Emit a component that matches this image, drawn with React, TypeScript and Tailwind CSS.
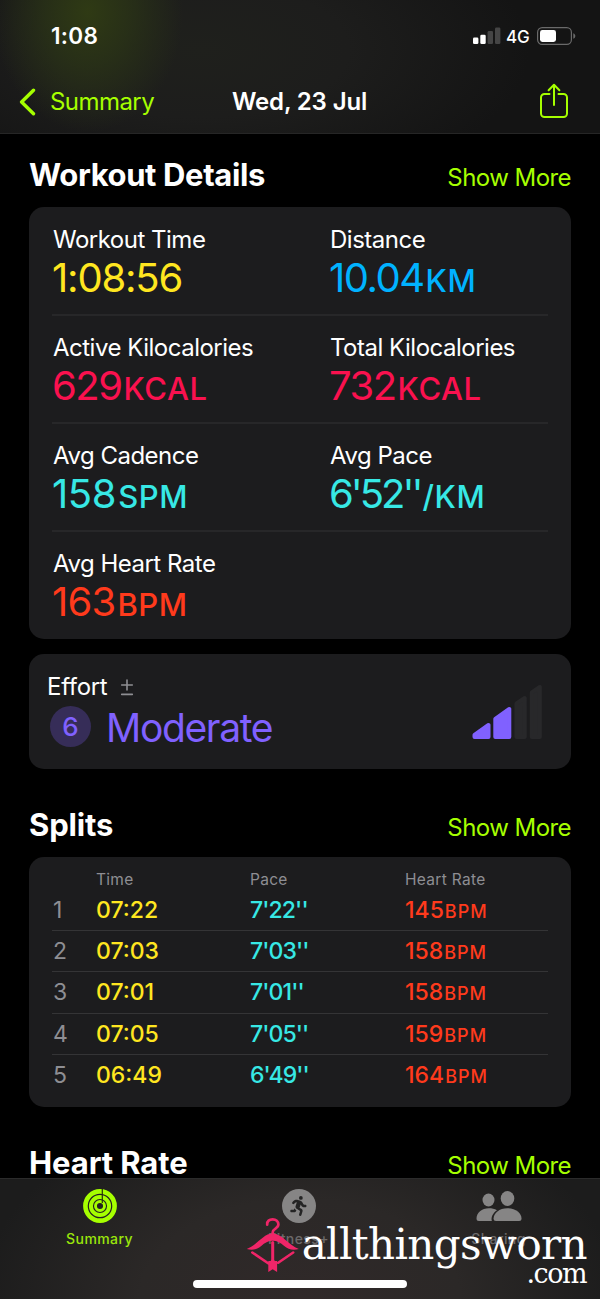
import React from "react";
import { FaPersonRunning } from "react-icons/fa6";

type Metric = { label: string; value: string; unit?: string; color: string; tracking?: string };

const metrics: Metric[][] = [
  [
    { label: "Workout Time", value: "1:08:56", color: "text-[#ffe620]", tracking: "tracking-[-1.2px]" },
    { label: "Distance", value: "10.04", unit: "KM", color: "text-[#00b2ff]", tracking: "tracking-[-1.5px]" },
  ],
  [
    { label: "Active Kilocalories", value: "629", unit: "KCAL", color: "text-[#fa114f]" },
    { label: "Total Kilocalories", value: "732", unit: "KCAL", color: "text-[#fa114f]" },
  ],
  [
    { label: "Avg Cadence", value: "158", unit: "SPM", color: "text-[#37e8e5]", tracking: "tracking-[-0.4px]" },
    { label: "Avg Pace", value: "6'52''", unit: "/KM", color: "text-[#37e8e5]", tracking: "tracking-[-3px]" },
  ],
  [{ label: "Avg Heart Rate", value: "163", unit: "BPM", color: "text-[#ff3a1c]", tracking: "tracking-[-0.8px]" }],
];

const splits = [
  { n: 1, time: "07:22", pace: "7'22''", bpm: 145 },
  { n: 2, time: "07:03", pace: "7'03''", bpm: 158 },
  { n: 3, time: "07:01", pace: "7'01''", bpm: 158 },
  { n: 4, time: "07:05", pace: "7'05''", bpm: 159 },
  { n: 5, time: "06:49", pace: "6'49''", bpm: 164 },
];

function StatusBar() {
  return (
    <div className="flex h-[72px] items-center justify-between pl-[51px] pr-[24px]">
      <span className="text-[22.5px] font-semibold leading-7 tracking-[0.3px] text-white">1:08</span>
      <div className="flex items-center">
        <svg width="28" height="18" viewBox="0 0 28 18" className="mr-[5px]">
          <rect x="0" y="10.5" width="5.4" height="6.5" rx="1.3" fill="#fff" />
          <rect x="7.3" y="7.8" width="5.4" height="9.2" rx="1.3" fill="#fff" />
          <rect x="14.6" y="4" width="5.4" height="13" rx="1.3" fill="#454545" />
          <rect x="22" y="0.5" width="5.4" height="16.5" rx="1.3" fill="#454545" />
        </svg>
        <span className="mr-[7px] w-[24px] pt-px text-[17px] font-medium leading-5 tracking-[-0.2px] text-white">4G</span>
        <svg width="39" height="18" viewBox="0 0 39 18">
          <rect x="0.6" y="0.6" width="33.8" height="16.8" rx="4.6" fill="none" stroke="#6a6a6a" strokeWidth="1.2" />
          <rect x="3" y="3" width="16" height="12" rx="2.4" fill="#fff" />
          <path d="M36.3 6.2c1.4.5 2 1.600 2 2.800s-.6 2.300-2 2.800z" fill="#6a6a6a" />
        </svg>
      </div>
    </div>
  );
}

function NavBar() {
  return (
    <div className="flex h-[60px] items-center justify-between pl-[19px] pr-[31px] text-[24px] leading-7">
      <div className="flex w-[160px] items-center gap-[13px] text-[#a6ff00]">
        <svg width="18" height="28" viewBox="0 0 18 28" fill="none" stroke="currentColor" strokeWidth="3.4" strokeLinecap="round" strokeLinejoin="round">
          <path d="M14.500 2.200 2.600 14l11.900 11.800" />
        </svg>
        <span className="tracking-[-0.55px]">Summary</span>
      </div>
      <span className="pl-px font-semibold tracking-[-0.15px] text-white">Wed, 23 Jul</span>
      <div className="flex w-[150px] justify-end pb-[2px] text-[#a6ff00]">
        <svg width="30" height="36" viewBox="0 0 30 36" fill="none" stroke="currentColor" strokeWidth="2" strokeLinecap="round" strokeLinejoin="round">
          <path d="M10.500 11H5.500a3.500 3.500 0 0 0-3.500 3.500v16A3.500 3.500 0 0 0 5.500 34h19a3.500 3.500 0 0 0 3.500-3.500v-16A3.500 3.500 0 0 0 24.500 11h-5" />
          <path d="M15 22V2M9.600 7.200 15 1.800l5.400 5.400" />
        </svg>
      </div>
    </div>
  );
}

function SectionHeading({ title, tracking }: { title: string; tracking: string }) {
  return (
    <div className="flex items-baseline justify-between">
      <h2 className={`whitespace-nowrap text-[31px] font-bold leading-[38px] text-white ${tracking}`}>{title}</h2>
      <a className="text-[24px] leading-7 tracking-[-0.55px] text-[#a6ff00]">Show More</a>
    </div>
  );
}

function MetricCell({ label, value, unit, color, tracking = "tracking-[-1.5px]" }: Metric) {
  return (
    <div>
      <div className="text-[24px] leading-7 tracking-[-0.5px] text-white">{label}</div>
      <div className={`-ml-px mt-px whitespace-nowrap text-[40px] leading-[45px] ${color}`}>
        <span className={tracking}>{value}</span>
        {unit && <span className="ml-[2px] text-[31px] font-medium leading-none tracking-[0.6px]">{unit}</span>}
      </div>
    </div>
  );
}

function MetricsCard() {
  return (
    <div className="mt-[13px] h-[432px] rounded-[15px] bg-[#1c1c1e] px-[23px] pt-px">
      {metrics.map((row, i) => (
        <div key={i} className={`grid h-[108px] grid-cols-[277px_1fr] pl-px pt-[18px] ${i < 3 ? "border-b-2 border-[#272729]" : ""}`}>
          {row.map((m) => (
            <MetricCell key={m.label} {...m} />
          ))}
        </div>
      ))}
    </div>
  );
}

function EffortCard() {
  return (
    <div className="mt-[15px] flex h-[115px] justify-between rounded-[15px] bg-[#1c1c1e] pl-[18px] pr-[28px] pt-[19px]">
      <div>
        <div className="flex items-center text-[24px] leading-7 tracking-[-0.3px] text-white">
          <span>Effort</span>
          <svg width="14" height="18" viewBox="0 0 14 18" className="ml-[13px]" stroke="#8e8e93" strokeWidth="1.6" strokeLinecap="round">
            <path d="M7 2v10M1.700 7h10.600M1.700 16.400h10.600" />
          </svg>
        </div>
        <div className="mt-[5px] flex items-start text-[#8061ff]">
          <span className="ml-[3px] flex size-[41px] items-center justify-center rounded-full bg-[#362d58] text-[26px] font-medium">6</span>
          <span className="ml-[15px] pt-[2px] text-[39px] leading-[40px] tracking-[-1.35px]">Moderate</span>
        </div>
      </div>
      <svg width="71" height="56" viewBox="0 0 71 56" className="mt-[12px]" strokeWidth="4" strokeLinejoin="round">
        <g fill="#8061ff" stroke="#8061ff">
          <path d="M2.500 50 16.500 40v12H2.500z" />
          <path d="M23.300 34 37.300 24v28h-14z" />
        </g>
        <g fill="#28282a" stroke="#28282a">
          <path d="M44.500 18.500 52.700 13v39h-8.200z" />
          <path d="M59.800 7.500 67.800 2v50h-8z" />
        </g>
      </svg>
    </div>
  );
}

function SplitsCard() {
  return (
    <div className="mt-[13px] h-[250px] rounded-[15px] bg-[#1c1c1e] px-[23px] pt-[13px]">
      <div className="grid grid-cols-[44px_154px_155px_1fr] text-[15.500px] leading-5 tracking-[0.3px] text-[#8e8e93]">
        <span />
        <span>Time</span>
        <span>Pace</span>
        <span>Heart Rate</span>
      </div>
      {splits.map((s, i) => (
        <div key={s.n} className={`grid h-[41.200px] grid-cols-[44px_154px_155px_1fr] items-center text-[23px] font-medium leading-7 ${i < 4 ? "border-b border-[#343436]" : ""}`}>
          <span className="pl-px font-normal text-[#8e8e93]">{s.n}</span>
          <span className="text-[#ffe620]">{s.time}</span>
          <span className="tracking-[-0.9px] text-[#37e8e5]">{s.pace}</span>
          <span className="text-[#ff3a1c]">
            <span>{s.bpm}</span>
            <span className="ml-px text-[18px] leading-none tracking-[1px]">BPM</span>
          </span>
        </div>
      ))}
    </div>
  );
}

function RingsIcon() {
  return (
    <svg width="34" height="34" viewBox="0 0 34 34" fill="none">
      <circle cx="17" cy="17" r="14.600" stroke="#a6ff00" strokeWidth="4.600" />
      <circle cx="17" cy="17" r="9.100" stroke="#a6ff00" strokeWidth="4" />
      <circle cx="17" cy="17" r="4.500" stroke="#a6ff00" strokeWidth="2.900" />
      <path d="M19.300 0v14" stroke="#24300c" strokeWidth="1.200" />
    </svg>
  );
}

function SharingIcon() {
  return (
    <svg width="46" height="31" viewBox="0 0 46 31" fill="#868585">
      <ellipse cx="12.500" cy="9" rx="6" ry="6.500" />
      <ellipse cx="31.500" cy="7.500" rx="6.800" ry="7.400" />
      <path d="M21 19.200C18.600 17.900 15.800 17.300 12.800 17.300 5.800 17.300.5 22 .5 27.500c0 1.700.8 2.500 2.400 2.500h13c-1.200-3.600 1-8 5.100-10.800z" />
      <path d="M31.500 17.300c8.300 0 14 5 14 10.200 0 1.700-.8 2.500-2.400 2.500H20c-1.600 0-2.400-.8-2.400-2.500 0-5.200 5.600-10.200 13.900-10.200z" />
    </svg>
  );
}

function Watermark() {
  return (
    <div className="absolute left-[246px] top-[39px] flex text-white">
      <svg width="54" height="56" viewBox="0 0 54 56" fill="none" stroke="#f02568" strokeLinecap="round">
        <path d="M21.200 6.600C20.800 3 23.500 1.400 26.700 1.400c3.200 0 5.700 2.200 5.700 5.200 0 4-5.700 3.800-5.700 7.600v3" strokeWidth="2.700" />
        <path d="M.8 31C11 27.500 17 15.500 26.700 15.500S42.500 27.500 52.800 31c-6 1.600-10.800.2-14.600-3-3.600-3.200-7-5.200-11.500-5.200S18.800 24.800 15.200 28C11.500 31.200 6.800 32.600.8 31z" fill="#f02568" stroke="none" />
        <path d="M6.300 34.500 22.500 45.500M47.200 34.500 32.200 44.700" strokeWidth="2.600" />
        <path d="M26.700 24.500v19" strokeWidth="3" />
        <path d="M22.300 43h2.200l2.200-2.500 2.200 2.500h2.200v11l-4.400-2.700-4.400 2.700z" fill="#f02568" stroke="none" />
      </svg>
      <div className="flex w-[287px] flex-col items-end pt-[2px] font-['DejaVu_Serif',serif]">
        <span className="whitespace-nowrap text-[42px] leading-[50px] tracking-[-0.6px]">allthingsworn</span>
        <span className="-mt-[9px] pr-px text-[27px] leading-[26px] tracking-[-1.5px]">.com</span>
      </div>
    </div>
  );
}

function TabBar() {
  return (
    <nav className="relative h-[121px] border-t border-[#2b2b2b] bg-[#1c1c1c] bg-[radial-gradient(ellipse_320px_200px_at_50%_100%,#302929_0%,#2b2827_50%,transparent_100%)]">
      <div className="flex pr-[2px] pt-[10px] text-[14px] font-medium leading-[18px] tracking-[0.4px] text-[#868585]">
        <div className="flex flex-1 flex-col items-center text-[#9be60b]">
          <RingsIcon />
          <span className="mt-[7px]">Summary</span>
        </div>
        <div className="flex flex-1 flex-col items-center">
          <span className="flex size-[34px] items-center justify-center rounded-full bg-[#868585] text-[#242424]">
            <FaPersonRunning size={20} />
          </span>
          <span className="mt-[7px] text-[#6c6a6a]">Fitness+</span>
        </div>
        <div className="flex flex-1 flex-col items-center pl-px">
          <span className="flex h-[34px] items-center">
            <SharingIcon />
          </span>
          <span className="mt-[7px] text-[#6c6a6a]">Sharing</span>
        </div>
      </div>
      <Watermark />
      <div className="absolute left-[193px] top-[101px] h-[8px] w-[214px] rounded-full bg-white" />
    </nav>
  );
}

export default function App() {
  return (
    <div className="flex h-[1299px] w-[600px] flex-col overflow-hidden bg-black font-['Inter',sans-serif]">
      <header className="h-[134px] shrink-0 border-b border-[#262626] bg-[#141414] bg-[radial-gradient(ellipse_95px_120px_at_88px_12px,#2f3a14_0%,#2b3516bb_45%,transparent_100%),radial-gradient(ellipse_330px_150px_at_200px_50px,#1f201c_0%,#1d1d1c_45%,transparent_100%)]">
        <StatusBar />
        <NavBar />
      </header>
      <main className="flex-1 overflow-hidden px-[29px] pt-[22px]">
        <SectionHeading title="Workout Details" tracking="tracking-[-0.37px]" />
        <MetricsCard />
        <EffortCard />
        <div className="mt-[37px]">
          <SectionHeading title="Splits" tracking="tracking-[-0.15px]" />
        </div>
        <SplitsCard />
        <div className="mt-[37px]">
          <SectionHeading title="Heart Rate" tracking="tracking-[-0.1px]" />
        </div>
      </main>
      <TabBar />
    </div>
  );
}
